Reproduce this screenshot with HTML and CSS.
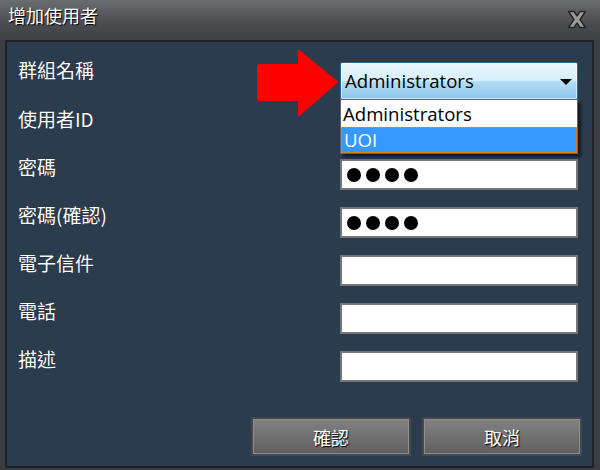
FILE: index.html
```html
<!DOCTYPE html>
<html lang="zh-Hant">
<head>
<meta charset="utf-8">
<title>增加使用者</title>
<link rel="stylesheet" href="styles.css">
</head>
<body>
<div class="window">
  <div class="titlebar">
    <span class="title">增加使用者</span>
    <svg class="close" width="20" height="19" viewBox="0 0 20 19">
      <path d="M1.5 1.5 H7 L10 6 L13 1.5 H18.5 L13 9.5 L18.5 17.5 H13 L10 13 L7 17.5 H1.5 L7 9.5 Z" fill="#9c9c9c" stroke="#262626" stroke-width="1.4" stroke-linejoin="round"/>
    </svg>
  </div>
  <div class="panel">
    <div class="form">
      <div class="label">群組名稱</div>
      <div class="combo-wrap">
        <div class="combo">
          <span class="combo-text">Administrators</span>
          <span class="combo-arrow"></span>
        </div>
        <ul class="dropdown">
          <li class="option">Administrators</li>
          <li class="option selected">UOI</li>
        </ul>
      </div>

      <div class="label">使用者ID</div>
      <div class="field"></div>

      <div class="label">密碼</div>
      <div class="field"><span class="dot"></span><span class="dot"></span><span class="dot"></span><span class="dot"></span></div>

      <div class="label">密碼(確認)</div>
      <div class="field"><span class="dot"></span><span class="dot"></span><span class="dot"></span><span class="dot"></span></div>

      <div class="label">電子信件</div>
      <div class="field"></div>

      <div class="label">電話</div>
      <div class="field"></div>

      <div class="label">描述</div>
      <div class="field"></div>
    </div>
    <div class="footer">
      <button class="btn">確認</button>
      <button class="btn">取消</button>
    </div>
  </div>
  <svg class="pointer" width="84" height="70" viewBox="0 0 84 70">
    <path d="M4 17 H43 V3 L81 34 L43 67 V52 H4 Q2 52 2 50 V19 Q2 17 4 17 Z" fill="#ff0000" stroke="#ff0000" stroke-width="2" stroke-linejoin="round"/>
  </svg>
</div>
</body>
</html>
```

FILE: styles.css
```css
* { box-sizing: border-box; }

html, body {
  margin: 0;
  padding: 0;
  background: #3c3f43;
}

body {
  font-family: "Noto Sans CJK TC", "Noto Sans", sans-serif;
  font-size: 18px;
}

.window {
  position: relative;
  width: 600px;
  height: 470px;
  background: #3b3e42;
  display: flex;
  flex-direction: column;
  overflow: hidden;
}

.titlebar {
  height: 40px;
  flex: none;
  background: linear-gradient(#6a6c70, #4a4c50 60%, #3e4044);
  display: flex;
  justify-content: space-between;
  align-items: flex-start;
  padding: 2px 13px 0 8px;
}

.title {
  color: #ffffff;
  font-size: 18px;
  line-height: 26px;
  text-shadow: 1px 1px 1px #000;
}

.close {
  margin-top: 8px;
}

.panel {
  flex: 1;
  margin: 0 6px 2px 5px;
  border: 2px solid #1f2226;
  background: #2c3c4f;
  display: flex;
  flex-direction: column;
}

.form {
  display: grid;
  grid-template-columns: 1fr 238px;
  grid-template-rows: 32px repeat(6, 31px);
  row-gap: 17px;
  padding: 20px 14px 0 11px;
}

.label {
  color: #ffffff;
  font-size: 19px;
  line-height: 20px;
  margin-top: -2px;
  text-shadow: 0 0 1px rgba(0,0,0,0.6);
}

.combo-wrap {
  position: relative;
  height: 38px;
  z-index: 2;
}

.combo {
  height: 38px;
  border: 1px solid #35668a;
  box-shadow: inset 0 0 0 1px rgba(255,255,255,0.55);
  background: linear-gradient(#eaf6fd 0%, #d7effb 48%, #b4ddf4 52%, #8cc6e9 100%);
  display: flex;
  align-items: center;
  justify-content: space-between;
  padding: 0 5px 0 4px;
  border-radius: 2px;
}

.combo-text {
  color: #000;
  line-height: 24px;
  font-family: "Open Sans", "Noto Sans CJK TC", sans-serif;
  font-size: 18.6px;
}

.combo-arrow {
  width: 0;
  height: 0;
  border-left: 6px solid transparent;
  border-right: 6px solid transparent;
  border-top: 6px solid #000;
  margin-top: 2px;
}

.dropdown {
  position: absolute;
  left: 0;
  top: 37px;
  width: 238px;
  margin: 0;
  padding: 0;
  list-style: none;
  background: #ffffff;
  border: 1px solid #646464;
  box-shadow: 3px 3px 3px rgba(0,0,0,0.55);
}

.option {
  height: 27px;
  line-height: 27px;
  padding-left: 2px;
  color: #000;
  font-family: "Open Sans", "Noto Sans CJK TC", sans-serif;
  font-size: 18.6px;
}

.option.selected {
  height: 26px;
  line-height: 25px;
  padding-left: 3px;
  background: #3399ff;
  color: #ffffff;
  outline: 1px dotted #e8891a;
  outline-offset: -1px;
}

.field {
  background: #ffffff;
  border: 2px solid #757575;
  display: flex;
  align-items: center;
  gap: 5px;
  padding-left: 5px;
}

.dot {
  width: 14px;
  height: 14px;
  border-radius: 50%;
  background: #000;
}

.footer {
  display: flex;
  justify-content: flex-end;
  gap: 11px;
  margin-top: 35px;
  padding-right: 10px;
}

.btn {
  width: 160px;
  height: 39px;
  border: 2px solid #45494d;
  box-shadow: inset 0 0 0 1px #8f8f8f;
  background: linear-gradient(#828282, #5f5f5f);
  color: #ffffff;
  font-family: "Noto Sans CJK TC", sans-serif;
  font-size: 18px;
  text-shadow: 1px 1px 1px #000;
  padding: 0;
}

.pointer {
  position: absolute;
  left: 256px;
  top: 48px;
  z-index: 3;
}
```
